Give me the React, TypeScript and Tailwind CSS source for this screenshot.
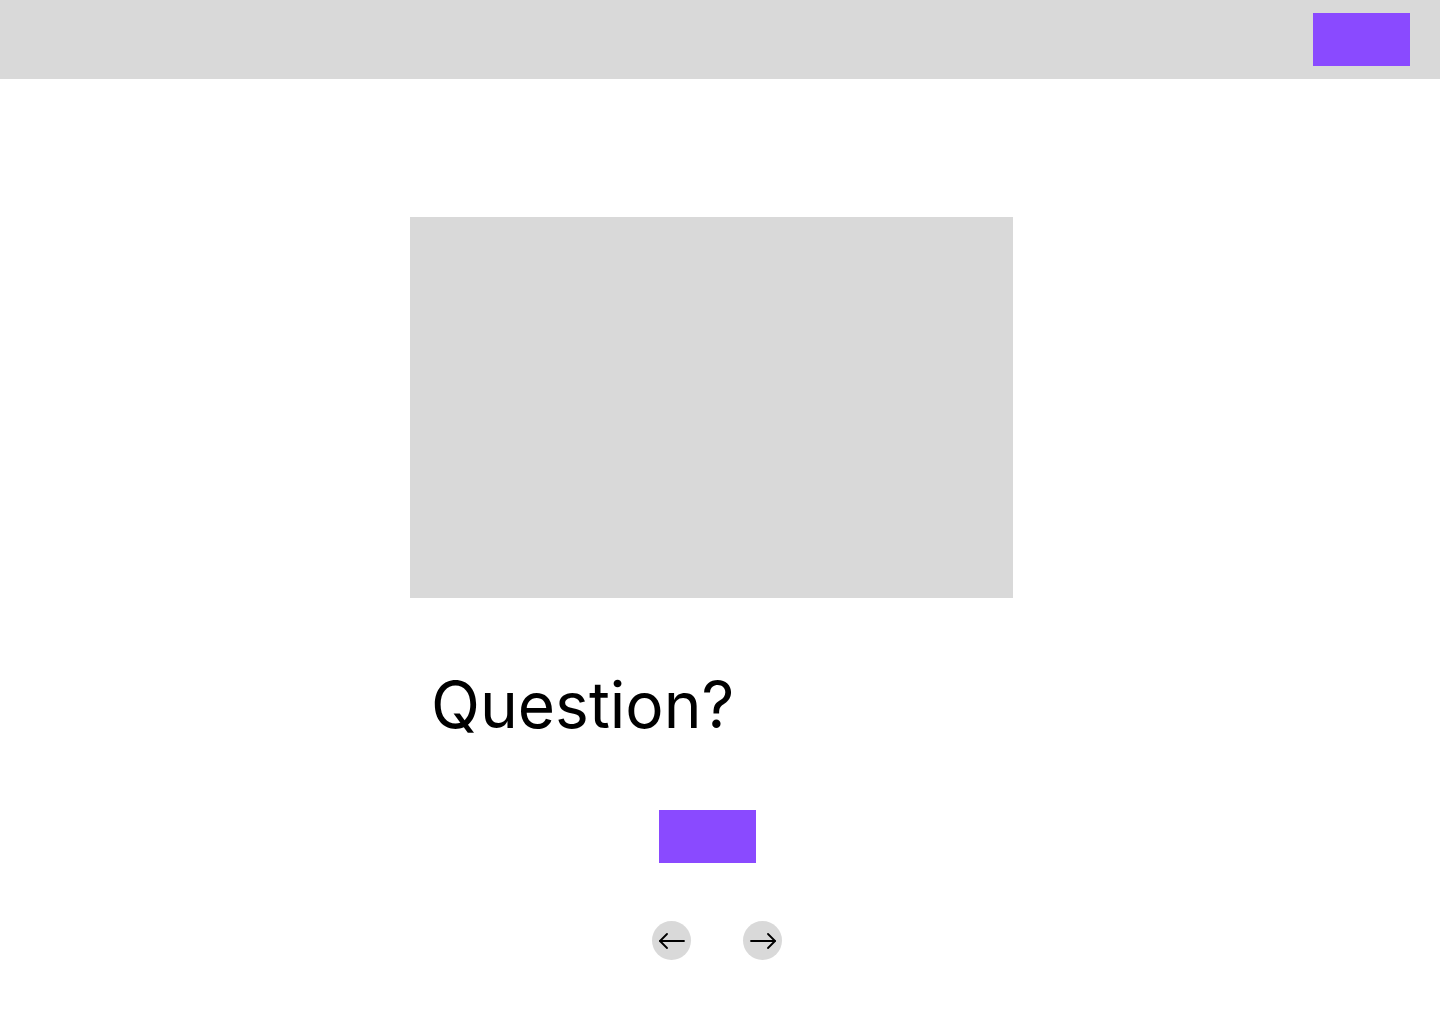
import React from "react";

const Arrow = ({ dir }: { dir: "left" | "right" }) => (
  <svg width="28" height="16" viewBox="0 0 28 16" fill="none" stroke="black" strokeWidth="1.8" strokeLinecap="round" strokeLinejoin="round">
    {dir === "left" ? (
      <>
        <line x1="2" y1="8" x2="26" y2="8" />
        <polyline points="9,1 2,8 9,15" />
      </>
    ) : (
      <>
        <line x1="2" y1="8" x2="26" y2="8" />
        <polyline points="19,1 26,8 19,15" />
      </>
    )}
  </svg>
);

export default function App() {
  return (
    <div className="min-h-screen w-[1440px] bg-white" style={{ fontFamily: "Inter, 'Noto Sans', sans-serif" }}>
      {/* header */}
      <header className="flex h-[79px] items-center justify-end bg-[#d9d9d9] pr-[30px]">
        <button className="h-[53px] w-[97px] bg-[#8a4aff]" />
      </header>

      <main className="flex flex-col">
        <div className="ml-[410px] mt-[138px] h-[381px] w-[603px] bg-[#d9d9d9]" />

        <h1 className="ml-[431px] mt-[68px] text-[64px] font-normal leading-[77px] text-black">Question?</h1>

        <button className="ml-[659px] mt-[67px] h-[53px] w-[97px] bg-[#8a4aff]" />

        <div className="ml-[652px] mt-[58px] flex gap-[52px]">
          <button className="flex h-[39px] w-[39px] items-center justify-center rounded-full bg-[#d9d9d9]">
            <Arrow dir="left" />
          </button>
          <button className="flex h-[39px] w-[39px] items-center justify-center rounded-full bg-[#d9d9d9]">
            <Arrow dir="right" />
          </button>
        </div>
      </main>
    </div>
  );
}
